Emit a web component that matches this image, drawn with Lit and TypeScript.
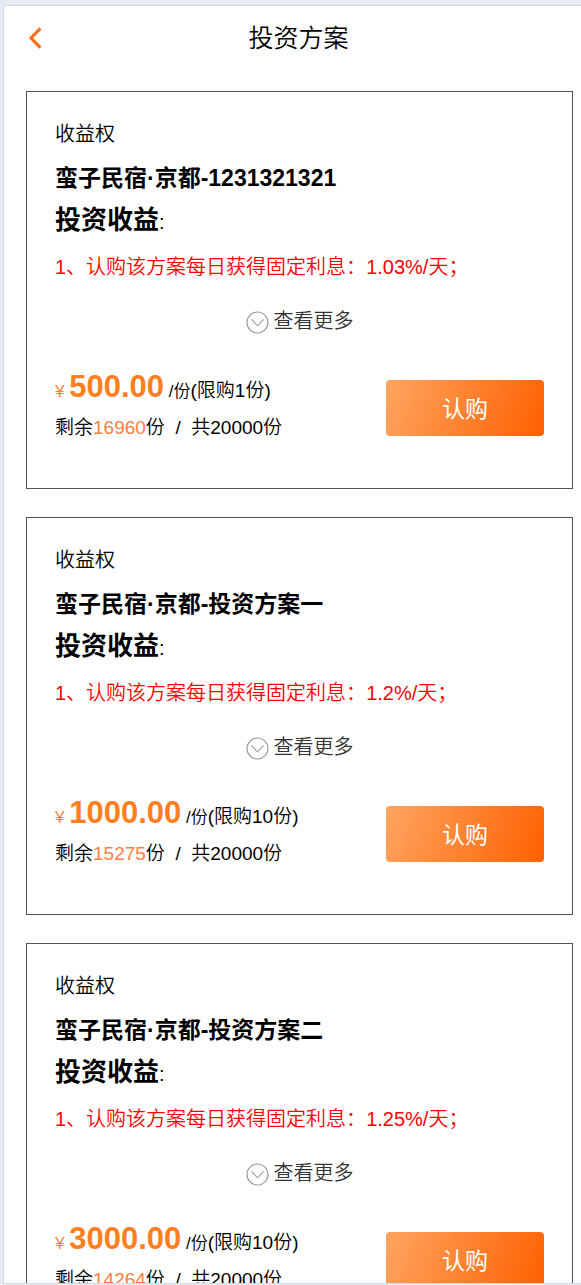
import { LitElement, html, css } from "lit";
import { customElement, property } from "lit/decorators.js";

interface Plan {
  name: string;
  rate: string;
  price: string;
  limit: number;
  left: number;
  total: number;
}

const plans: Plan[] = [
  { name: "蛮子民宿·京都-1231321321", rate: "1.03%", price: "500.00", limit: 1, left: 16960, total: 20000 },
  { name: "蛮子民宿·京都-投资方案一", rate: "1.2%", price: "1000.00", limit: 10, left: 15275, total: 20000 },
  { name: "蛮子民宿·京都-投资方案二", rate: "1.25%", price: "3000.00", limit: 10, left: 14264, total: 20000 },
];

@customElement("plan-card")
export class PlanCard extends LitElement {
  @property({ attribute: false }) plan!: Plan;

  static styles = css`
    :host {
      display: block;
    }
    .card {
      border: 1px solid #50525c;
      padding: 28px 28px 42px;
    }
    .kind {
      margin: 0 0 8px;
      font-size: 20px;
      line-height: 28px;
    }
    .name {
      margin: 0;
      font-size: 23px;
      line-height: 44px;
      font-weight: 700;
    }
    .income {
      margin: 0 0 11px;
      font-size: 20px;
      line-height: 40px;
      font-weight: inherit;
    }
    .income strong {
      font-size: 26px;
      font-weight: 700;
    }
    .rule {
      margin: 0 0 26px;
      font-size: 20px;
      line-height: 28px;
      color: #f00;
    }
    .more {
      display: flex;
      align-items: center;
      gap: 5px;
      margin: 0 auto 34px;
      padding: 0;
      border: 0;
      background: none;
      font: inherit;
      font-size: 20px;
      line-height: 28px;
      color: #333;
      cursor: pointer;
    }
    .more svg {
      display: block;
      margin-top: 2px;
    }
    .foot {
      display: flex;
      align-items: center;
      justify-content: space-between;
    }
    .line {
      margin: 0;
      font-size: 19px;
      line-height: 36px;
      white-space: pre;
    }
    .yen {
      font-size: 17px;
      color: #ff7e3e;
    }
    .price {
      font-size: 31px;
      font-weight: 700;
      color: #ff7f1f;
    }
    .unit {
      font-size: 17px;
    }
    .left {
      color: #ff7e3e;
    }
    .buy {
      flex: none;
      width: 158px;
      height: 56px;
      padding: 0 0 2px;
      border: 0;
      border-radius: 4px;
      background: linear-gradient(110deg, #ffa560, #ff6000);
      font: inherit;
      font-size: 23px;
      font-weight: 400;
      color: #fff;
      cursor: pointer;
    }
  `;

  render() {
    const p = this.plan;
    return html`
      <article class="card">
        <p class="kind">收益权</p>
        <h2 class="name">${p.name}</h2>
        <h3 class="income"><strong>投资收益</strong>:</h3>
        <p class="rule">1、认购该方案每日获得固定利息：${p.rate}/天；</p>
        <button class="more" type="button">
          <svg width="23" height="23" viewBox="0 0 23 23" fill="none" stroke="#999" stroke-width="1.1" aria-hidden="true">
            <circle cx="11.5" cy="11.5" r="10.5" />
            <path d="M5.4 8.4 L11.5 14.8 L17.6 8.4" />
          </svg>
          查看更多
        </button>
        <div class="foot">
          <div>
            <p class="line"><span class="yen">¥ </span><span class="price">${p.price}</span><span class="unit"> /份</span>(限购${p.limit}份)</p>
            <p class="line">剩余<span class="left">${p.left}</span>份  /  共${p.total}份</p>
          </div>
          <button class="buy" type="button">认购</button>
        </div>
      </article>
    `;
  }
}

@customElement("app-root")
export class AppRoot extends LitElement {
  static styles = css`
    :host {
      display: block;
      box-sizing: border-box;
      height: 100vh;
      padding: 5px 0 1px 3px;
      background: #e7ecf4;
      color: #000;
      font-family: "Liberation Sans", "Noto Sans CJK SC", sans-serif;
      font-weight: 350;
    }
    .screen {
      box-sizing: border-box;
      height: 100%;
      border: 1px solid #d6d9de;
      border-right: 0;
      background: #fff;
      overflow: auto;
      scrollbar-width: none;
    }
    .bar {
      display: grid;
      grid-template-columns: 64px 1fr 52px;
      align-items: center;
      height: 64px;
    }
    .back {
      display: flex;
      padding: 0 0 0 24px;
      border: 0;
      background: none;
      cursor: pointer;
    }
    .title {
      margin: 0;
      font-size: 25px;
      line-height: 36px;
      font-weight: inherit;
      text-align: center;
    }
    .list {
      display: grid;
      gap: 28px;
      padding: 21px 8px 28px 22px;
    }
  `;

  render() {
    return html`
      <div class="screen">
        <header class="bar">
          <button class="back" type="button" aria-label="返回">
            <svg width="14" height="22" viewBox="0 0 14 22" fill="none" stroke="#ff6a13" stroke-width="3" aria-hidden="true">
              <path d="M12.4 1.4 L3 11 L12.4 20.6" />
            </svg>
          </button>
          <h1 class="title">投资方案</h1>
        </header>
        <main class="list">${plans.map((p) => html`<plan-card .plan=${p}></plan-card>`)}</main>
      </div>
    `;
  }
}
